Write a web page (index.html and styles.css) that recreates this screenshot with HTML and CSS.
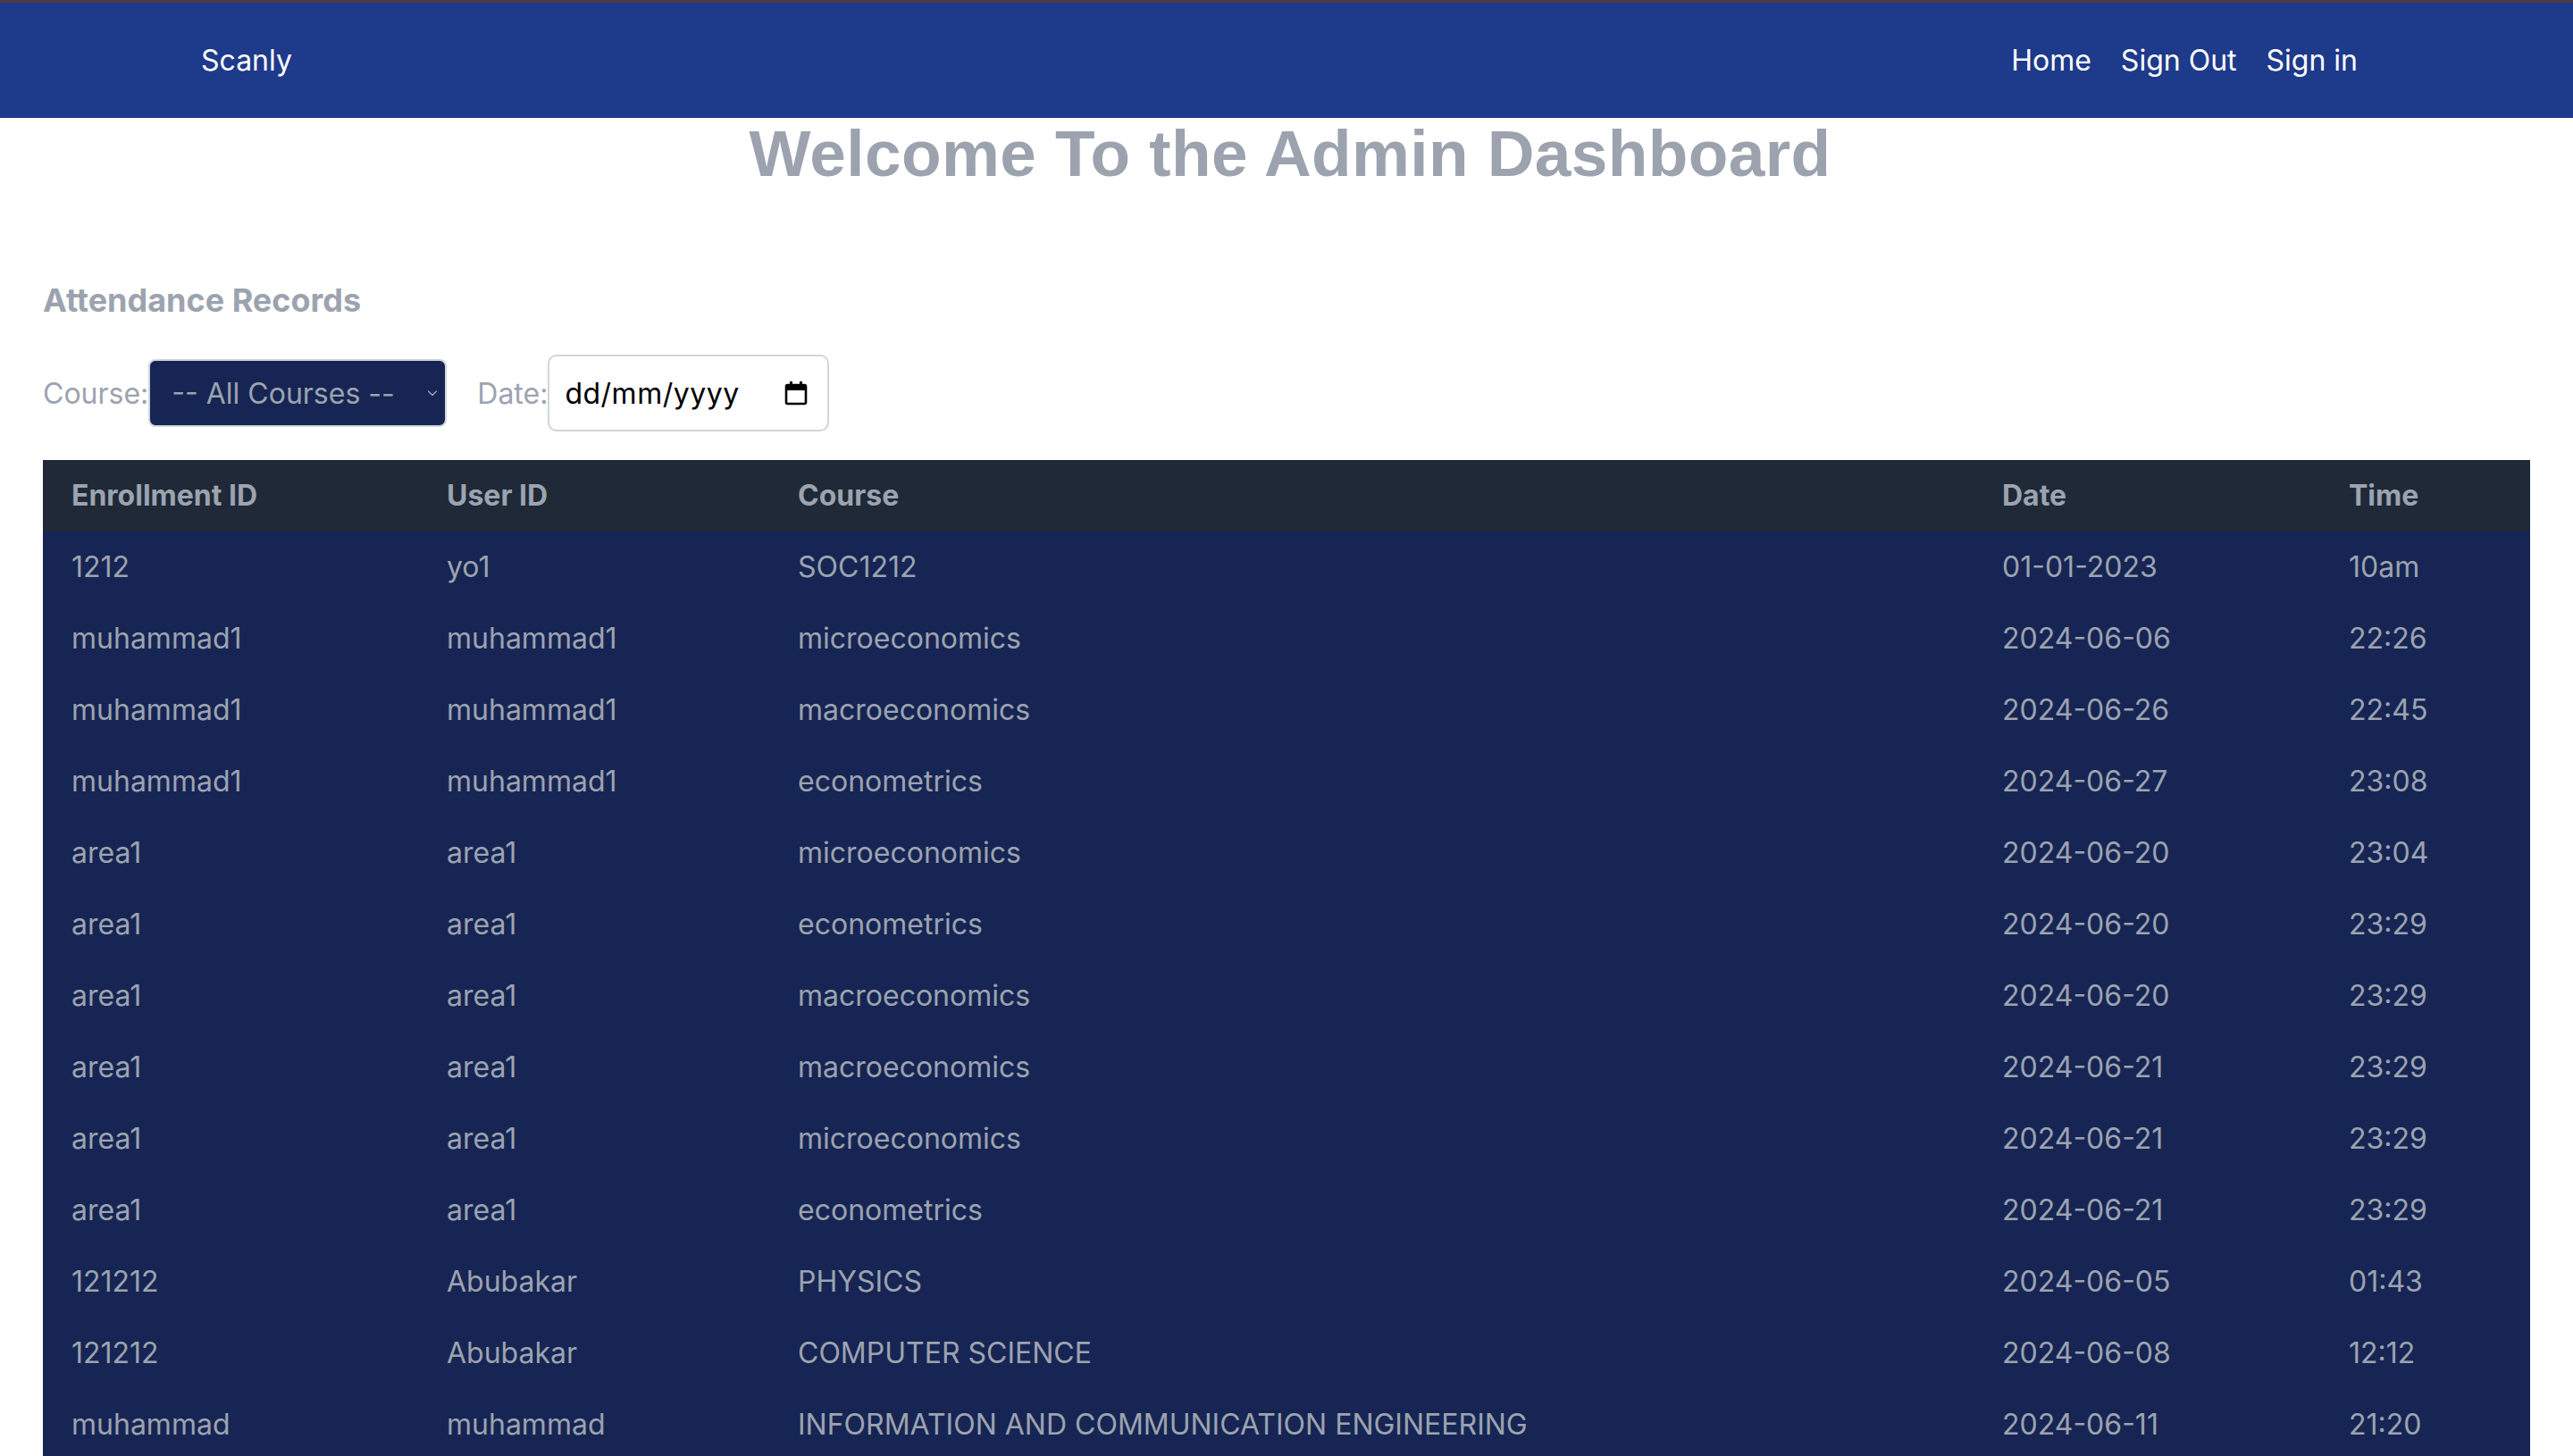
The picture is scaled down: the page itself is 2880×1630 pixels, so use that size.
FILE: index.html
```html
<!DOCTYPE html>
<html lang="en">
<head>
<meta charset="utf-8">
<title>Scanly Admin Dashboard</title>
<link rel="stylesheet" href="styles.css">
</head>
<body>
<nav class="navbar">
  <a class="brand" href="#">Scanly</a>
  <div class="nav-links">
    <a href="#">Home</a>
    <a href="#">Sign Out</a>
    <a href="#">Sign in</a>
  </div>
</nav>
<h1 class="page-title">Welcome To the Admin Dashboard</h1>
<section class="records">
  <h2 class="records-title">Attendance Records</h2>
  <div class="filters">
    <label class="filter-label">Course:</label>
    <div class="select-wrap">
      <select class="course-select">
        <option>-- All Courses --</option>
      </select>
      <svg class="chevron" viewBox="0 0 16 16" width="16" height="16"><path d="M3.5 6 8 10.5 12.5 6" fill="none" stroke="#9ca3af" stroke-width="1.4" stroke-linecap="round" stroke-linejoin="round"/></svg>
    </div>
    <label class="filter-label date-label">Date:</label>
    <div class="date-input">
      <span class="date-text">dd/mm/yyyy</span>
      <svg class="cal-icon" viewBox="0 0 26 28" width="26" height="28"><rect x="2" y="5" width="22" height="21" rx="1.5" fill="none" stroke="#000" stroke-width="2.6"/><rect x="2" y="5" width="22" height="6" fill="#000"/><rect x="6" y="1" width="3" height="6" fill="#000"/><rect x="17" y="1" width="3" height="6" fill="#000"/></svg>
    </div>
  </div>
  <table class="records-table">
    <thead>
      <tr>
        <th class="c1">Enrollment ID</th>
        <th class="c2">User ID</th>
        <th class="c3">Course</th>
        <th class="c4">Date</th>
        <th class="c5">Time</th>
      </tr>
    </thead>
    <tbody>
      <tr><td>1212</td><td>yo1</td><td>SOC1212</td><td>01-01-2023</td><td>10am</td></tr>
      <tr><td>muhammad1</td><td>muhammad1</td><td>microeconomics</td><td>2024-06-06</td><td>22:26</td></tr>
      <tr><td>muhammad1</td><td>muhammad1</td><td>macroeconomics</td><td>2024-06-26</td><td>22:45</td></tr>
      <tr><td>muhammad1</td><td>muhammad1</td><td>econometrics</td><td>2024-06-27</td><td>23:08</td></tr>
      <tr><td>area1</td><td>area1</td><td>microeconomics</td><td>2024-06-20</td><td>23:04</td></tr>
      <tr><td>area1</td><td>area1</td><td>econometrics</td><td>2024-06-20</td><td>23:29</td></tr>
      <tr><td>area1</td><td>area1</td><td>macroeconomics</td><td>2024-06-20</td><td>23:29</td></tr>
      <tr><td>area1</td><td>area1</td><td>macroeconomics</td><td>2024-06-21</td><td>23:29</td></tr>
      <tr><td>area1</td><td>area1</td><td>microeconomics</td><td>2024-06-21</td><td>23:29</td></tr>
      <tr><td>area1</td><td>area1</td><td>econometrics</td><td>2024-06-21</td><td>23:29</td></tr>
      <tr><td>121212</td><td>Abubakar</td><td>PHYSICS</td><td>2024-06-05</td><td>01:43</td></tr>
      <tr><td>121212</td><td>Abubakar</td><td>COMPUTER SCIENCE</td><td>2024-06-08</td><td>12:12</td></tr>
      <tr><td>muhammad</td><td>muhammad</td><td>INFORMATION AND COMMUNICATION ENGINEERING</td><td>2024-06-11</td><td>21:20</td></tr>
    </tbody>
  </table>
</section>
</body>
</html>
```
FILE: styles.css
```css
* { box-sizing: border-box; }

body {
  margin: 0;
  background: #ffffff;
  font-family: Inter, "Noto Sans", sans-serif;
  color: #9ca3af;
}

.navbar {
  height: 132px;
  border-top: 3px solid #4f3a3e;
  background: #1e3a8a;
  display: flex;
  align-items: center;
  justify-content: space-between;
  padding: 0 241px 0 225px;
}

.navbar a {
  color: #ffffff;
  text-decoration: none;
  font-size: 32px;
  font-weight: 400;
}

.nav-links {
  display: flex;
  gap: 33px;
}

.page-title {
  margin: 0;
  padding-left: 8px;
  text-align: center;
  font-family: "Liberation Sans", Arial, sans-serif;
  font-weight: 700;
  font-size: 73px;
  line-height: 80px;
  letter-spacing: 0.4px;
  color: #9ca3af;
}

.records {
  padding: 0 48px;
}

.records-title {
  margin: 96px 0 33px 0;
  font-size: 36px;
  line-height: 56px;
  font-weight: 700;
  color: #9ca3af;
}

.filters {
  display: flex;
  align-items: center;
  height: 86px;
  margin-bottom: 32px;
}

.filter-label {
  font-size: 32px;
  color: #9ca3af;
}

.date-label {
  margin-left: 34px;
}

.select-wrap {
  position: relative;
  width: 334px;
  height: 76px;
}

.course-select {
  appearance: none;
  -webkit-appearance: none;
  width: 100%;
  height: 100%;
  background: #172554;
  border: 2px solid #d1d5db;
  border-radius: 8px;
  color: #9ca3af;
  font-family: Inter, "Noto Sans", sans-serif;
  font-size: 32px;
  padding: 0 0 0 24px;
}

.chevron {
  position: absolute;
  right: 8px;
  top: 30px;
}

.date-input {
  width: 315px;
  height: 86px;
  background: #ffffff;
  border: 2px solid #d1d5db;
  border-radius: 10px;
  display: flex;
  align-items: center;
  justify-content: space-between;
  padding: 0 22px 0 17px;
}

.date-text {
  color: #000000;
  font-size: 32px;
  letter-spacing: 0.5px;
}

.cal-icon {
  display: block;
}

.records-table {
  width: 100%;
  table-layout: fixed;
  border-collapse: collapse;
}

.records-table th,
.records-table td {
  height: 80px;
  padding: 0 32px;
  text-align: left;
  vertical-align: middle;
  white-space: nowrap;
}

.records-table th {
  background: #1f2937;
  font-size: 32px;
  font-weight: 700;
  color: #9ca3af;
  padding-bottom: 2px;
}

.records-table td {
  background: #172554;
  font-size: 32px;
  font-weight: 400;
  color: #9ca3af;
  padding-bottom: 2px;
}

.c1 { width: 420px; }
.c2 { width: 393px; }
.c3 { width: 1348px; }
.c4 { width: 388px; }
.c5 { width: 235px; }
```
